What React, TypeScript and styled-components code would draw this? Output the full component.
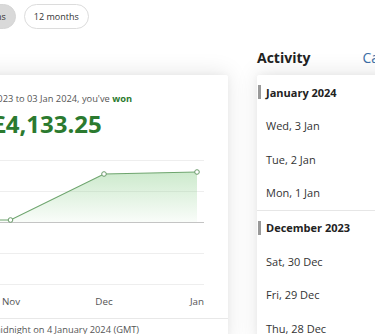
import React from "react";
import styled, { createGlobalStyle } from "styled-components";

const Global = createGlobalStyle`
  html, body { margin: 0; padding: 0; background: #fff; overflow: hidden; }
  body { font-family: "Open Sans", "Liberation Sans", sans-serif; color: #333; }
  #root { width: 375px; height: 334px; overflow: hidden; }
`;

const Page = styled.div`
  display: grid;
  grid-template-columns: 260px 200px;
  grid-template-rows: 75px auto;
  column-gap: 29px;
  margin-left: -32px;
  width: 489px;
`;

const TopLeft = styled.div`
  padding-top: 4px;
`;

const PillRow = styled.div`
  display: flex;
  gap: 8px;
  margin-left: -12px;
`;

const Pill = styled.button<{ $active?: boolean }>`
  height: 25px;
  padding: 0 9px;
  border-radius: 13px;
  border: 1px solid ${(p) => (p.$active ? "#d6d6d6" : "#dcdcdc")};
  background: ${(p) => (p.$active ? "#d9d9d9" : "#fff")};
  font-family: inherit;
  font-size: 9px;
  color: #333;
  white-space: nowrap;
`;

const TopRight = styled.div`
  align-self: end;
  padding-bottom: 7px;
  display: flex;
  align-items: center;
  gap: 52px;
`;

const Heading = styled.h2`
  margin: 0;
  font-size: 14px;
  line-height: 20px;
  font-weight: 700;
  color: #222;
`;

const Link = styled.a`
  font-size: 14px;
  line-height: 20px;
  color: #3b6ea5;
  text-decoration: none;
`;

const Card = styled.section`
  background: #fff;
  box-shadow: 0 -2px 22px rgba(0, 0, 0, 0.1), 0 0 6px rgba(0, 0, 0, 0.04);
  border-radius: 2px;
`;

const SummaryCard = styled(Card)`
  padding: 17px 24px 0;
`;

const Sentence = styled.p`
  margin: 0;
  font-size: 9.3px;
  line-height: 14px;
  color: #555;
  white-space: nowrap;
`;

const Won = styled.strong`
  color: #2b7a2f;
  font-weight: 700;
`;

const Amount = styled.div`
  margin-top: 3px;
  font-size: 24px;
  line-height: 30px;
  font-weight: 700;
  color: #2b7a2f;
`;

const ChartSvg = styled.svg`
  display: block;
  margin-top: 11px;
`;

const AxisRow = styled.div`
  display: flex;
  gap: 53px;
  margin-top: 5px;
  margin-left: -1px;
`;

const AxisLabel = styled.span`
  flex: 0 0 40px;
  text-align: center;
  font-size: 9.8px;
  line-height: 14px;
  color: #555;
`;

const Footer = styled.div`
  margin: 9px -24px 0;
  padding: 4px 24px 8px;
  border-top: 1px solid #e8e8e8;
  font-size: 9.3px;
  line-height: 14px;
  color: #555;
  white-space: nowrap;
`;

const ActivityCard = styled(Card)`
  display: flex;
  flex-direction: column;
`;

const Group = styled.div<{ $divider?: boolean }>`
  border-bottom: ${(p) => (p.$divider ? "1px solid #e6e6e6" : "none")};
`;

const GroupHeader = styled.div`
  height: 34px;
  display: flex;
  align-items: center;
  gap: 5px;
  padding-left: 1px;
  font-size: 11px;
  font-weight: 700;
  color: #222;
  &::before {
    content: "";
    width: 3px;
    height: 14px;
    background: #9a9a9a;
  }
`;

const Row = styled.div`
  height: 33.5px;
  display: flex;
  align-items: center;
  padding-left: 9px;
  font-size: 11px;
  color: #333;
`;

const gridYs = [10, 41, 103, 134];

function Chart() {
  const pts = [
    [18.5, 70],
    [112, 24],
    [205, 22],
  ];
  const line = `M0 70 L${pts.map((p) => p.join(" ")).join(" L")}`;
  const area = `${line} L205 72 L0 72 Z`;
  return (
    <ChartSvg width="212" height="140" viewBox="0 0 212 140">
      <defs>
        <linearGradient id="fillG" x1="0" y1="0" x2="0" y2="1">
          <stop offset="0" stopColor="#8fd08f" stopOpacity="0.45" />
          <stop offset="1" stopColor="#8fd08f" stopOpacity="0.05" />
        </linearGradient>
      </defs>
      {gridYs.map((y) => (
        <line key={y} x1="0" x2="212" y1={y + 0.5} y2={y + 0.5} stroke="#eeeeee" strokeWidth="1" />
      ))}
      <path d={area} fill="url(#fillG)" />
      <line x1="0" x2="212" y1="72.5" y2="72.5" stroke="#c4c4c4" strokeWidth="1" />
      <path d={line} fill="none" stroke="#6ea56e" strokeWidth="1.2" />
      {pts.map(([x, y]) => (
        <circle key={x} cx={x} cy={y} r="2.3" fill="#fff" stroke="#6a9a6a" strokeWidth="1" />
      ))}
    </ChartSvg>
  );
}

export default function App() {
  return (
    <>
      <Global />
      <Page>
        <TopLeft>
          <PillRow>
            <Pill $active>3 months</Pill>
            <Pill>12 months</Pill>
          </PillRow>
        </TopLeft>
        <TopRight>
          <Heading>Activity</Heading>
          <Link href="#">Calendar</Link>
        </TopRight>
        <SummaryCard>
          <Sentence>
            2023 to 03 Jan 2024, you've <Won>won</Won>
          </Sentence>
          <Amount>£4,133.25</Amount>
          <Chart />
          <AxisRow>
            <AxisLabel>Nov</AxisLabel>
            <AxisLabel>Dec</AxisLabel>
            <AxisLabel>Jan</AxisLabel>
          </AxisRow>
          <Footer>midnight on 4 January 2024 (GMT)</Footer>
        </SummaryCard>
        <ActivityCard>
          <Group $divider>
            <GroupHeader>January 2024</GroupHeader>
            <Row>Wed, 3 Jan</Row>
            <Row>Tue, 2 Jan</Row>
            <Row>Mon, 1 Jan</Row>
          </Group>
          <Group>
            <GroupHeader>December 2023</GroupHeader>
            <Row>Sat, 30 Dec</Row>
            <Row>Fri, 29 Dec</Row>
            <Row>Thu, 28 Dec</Row>
          </Group>
        </ActivityCard>
      </Page>
    </>
  );
}
